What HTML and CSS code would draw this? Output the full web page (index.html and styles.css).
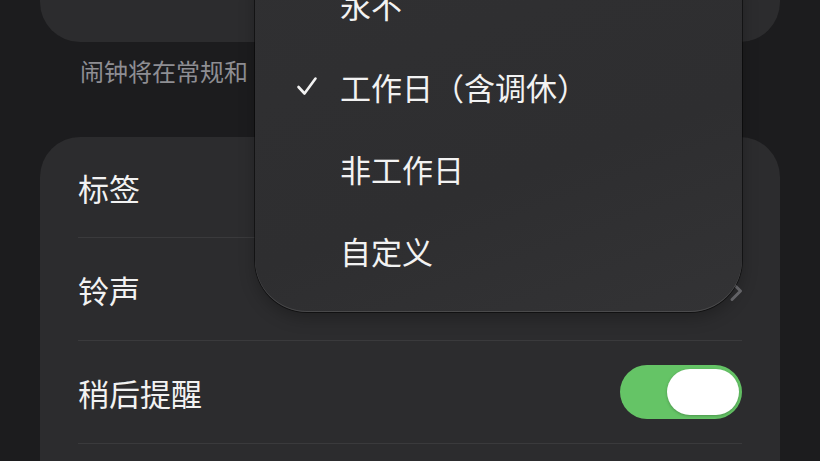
FILE: index.html
```html
<!DOCTYPE html>
<html lang="zh-CN">
<head>
  <meta charset="UTF-8">
  <meta name="viewport" content="width=device-width, initial-scale=1">
  <title>闹钟</title>
  <link rel="stylesheet" href="styles.css">
</head>
<body>

  <div class="page">
    <div class="top-card"></div>

    <p class="note">闹钟将在常规和调休工作日响铃。</p>

    <div class="card">
      <div class="row">
        <span>标签</span>
        <span class="value">闹钟</span>
      </div>
      <div class="row">
        <span>铃声</span>
        <svg class="chevron" width="14" height="22" viewBox="0 0 14 22">
          <polyline points="3,2.5 11.5,11 3,19.5" fill="none" stroke="#6b6b6f" stroke-width="3" stroke-linecap="round" stroke-linejoin="round"/>
        </svg>
      </div>
      <div class="row">
        <span>稍后提醒</span>
        <div class="toggle on"><div class="knob"></div></div>
      </div>
      <div class="row"></div>
    </div>

    <!-- repeat menu, open -->
    <div class="menu">
      <div class="menu-item"><span class="check"></span>永不</div>
      <div class="menu-item">
        <span class="check">
          <svg width="22" height="20" viewBox="0 0 22 20">
            <polyline points="2.5,11 8.5,17.5 19.5,2.5" fill="none" stroke="#f2f2f2" stroke-width="2.6" stroke-linecap="round" stroke-linejoin="round"/>
          </svg>
        </span>工作日（含调休）
      </div>
      <div class="menu-item"><span class="check"></span>非工作日</div>
      <div class="menu-item"><span class="check"></span>自定义</div>
    </div>
  </div>

</body>
</html>
```

FILE: styles.css
```css
body {
  margin: 0;
  width: 820px;
  height: 461px;
  overflow: hidden;
  background: #1c1c1e;
  color: #f2f2f2;
  font-family: "Noto Sans CJK SC", "Noto Sans", sans-serif;
}

.page {
  position: relative;
  padding: 0 40px;
}

.top-card {
  height: 42px;
  background: #2c2c2e;
  border-radius: 0 0 40px 40px;
}

/* the rest of the sentence sits under the open menu */
.note {
  width: 168px;
  margin: 12px 0 49px 40px;
  overflow: hidden;
  font-size: 24px;
  line-height: 34px;
  color: #8e8e93;
  white-space: nowrap;
}

.card {
  background: #2c2c2e;
  border-radius: 40px;
  padding: 0 38px;
  height: 400px;
}

.row {
  height: 102px;
  display: flex;
  align-items: center;
  justify-content: space-between;
  border-bottom: 1px solid #3a3a3c;
  font-size: 31px;
}

.row:first-child {
  height: 100px;
}

.row .value {
  color: #8e8e93;
}

.chevron {
  margin: 4px -1px 0 0;
}

.toggle {
  position: relative;
  width: 122px;
  height: 54px;
  border-radius: 27px;
  background: #3a3a3c;
}

.toggle.on {
  background: #65c466;
}

.knob {
  position: absolute;
  top: 4px;
  right: 3px;
  width: 72px;
  height: 46px;
  border-radius: 23px;
  background: #fff;
  box-shadow: 0 1px 3px rgba(0, 0, 0, 0.25);
}

.menu {
  position: absolute;
  top: -56px;
  left: 255px;
  width: 487px;
  padding: 19px 0 21px;
  border-radius: 52px;
  background: linear-gradient(160deg, #303032, #2e2e30 60%, #333335);
  box-shadow: 0 0 0 1px rgba(0, 0, 0, 0.5), inset 0 -1px 0 rgba(255, 255, 255, 0.12), 0 6px 16px rgba(0, 0, 0, 0.25);
}

.menu-item {
  height: 82px;
  display: flex;
  align-items: center;
  padding-left: 41px;
  font-size: 31px;
  color: #f2f2f2;
}

.check {
  display: flex;
  align-items: center;
  width: 44px;
}
```
